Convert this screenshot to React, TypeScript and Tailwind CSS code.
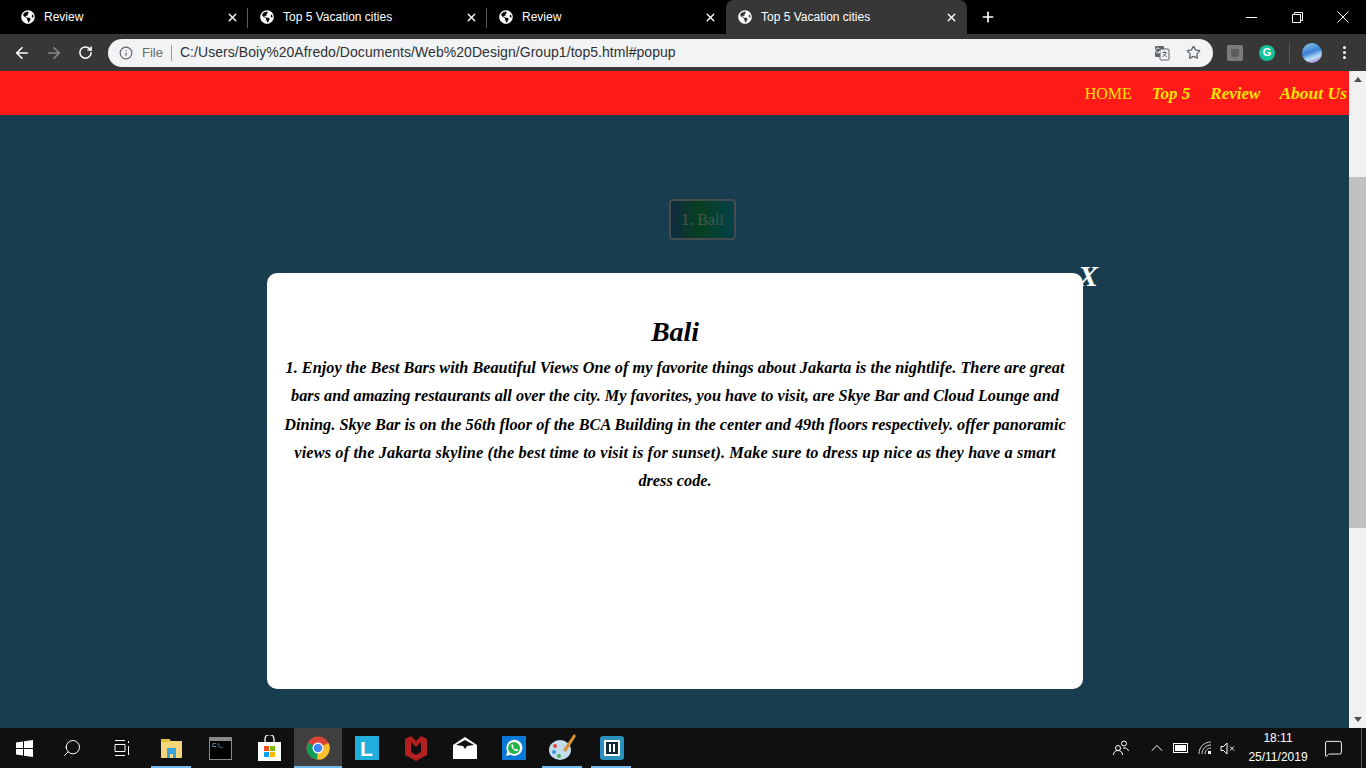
import { ArrowLeft, ArrowRight, RotateCw, Info, Star, X, Plus, Search, ChevronUp, MessageSquare } from "lucide-react"
import { FaGlobeAmericas } from "react-icons/fa"

const script = "font-['Liberation_Serif',serif] italic font-bold"

const bodyLines = [
  { text: "1. Enjoy the Best Bars with Beautiful Views One of my favorite things about Jakarta is the nightlife. There are great", cls: "" },
  { text: "bars and amazing restaurants all over the city. My favorites, you have to visit, are Skye Bar and Cloud Lounge and", cls: "" },
  { text: "Dining. Skye Bar is on the 56th floor of the BCA Building in the center and 49th floors respectively. offer panoramic", cls: "" },
  { text: "views of the Jakarta skyline (the best time to visit is for sunset). Make sure to dress up nice as they have a smart", cls: "tracking-[0.13px]" },
  { text: "dress code.", cls: "" },
]

function Tab({ title, active, divider }: { title: string; active?: boolean; divider?: boolean }) {
  return (
    <div
      className={
        active
          ? "relative flex h-[34px] w-[241px] items-center rounded-t-[8px] bg-[#373737] pl-[12px] pr-[9px]"
          : "relative flex h-[34px] w-[239px] items-center pl-[12px] pr-[9px]"
      }
    >
      <FaGlobeAmericas className="h-[14px] w-[14px] shrink-0 text-white" />
      <span className="ml-[9px] flex-1 text-[12px] text-white">{title}</span>
      <X className="h-[13px] w-[13px] text-white" strokeWidth={2.5} />
      {divider && <div className="absolute right-0 top-[8px] h-[20px] w-px bg-[#5a5a5a]" />}
    </div>
  )
}

function TaskCell({ children, bar, active }: { children: React.ReactNode; bar?: boolean; active?: boolean }) {
  return (
    <div className={active ? "relative flex h-10 w-[48px] items-center justify-center bg-[#3f3f3f]" : "relative flex h-10 w-[49px] items-center justify-center"}>
      {children}
      {bar && <div className={active ? "absolute bottom-0 left-0 h-[2px] w-full bg-[#76b9ed]" : "absolute bottom-0 left-[4px] h-[2px] w-[40px] bg-[#76b9ed]"} />}
    </div>
  )
}

function Scrollbar() {
  return (
    <div className="flex w-[17px] flex-col items-center bg-[#f1f1f1]">
      <div className="flex h-[17px] items-center justify-center">
        <div className="h-0 w-0 border-x-[4px] border-b-[5px] border-x-transparent border-b-[#505050]" />
      </div>
      <div className="mt-[89px] h-[351px] w-full bg-[#c1c1c1]" />
      <div className="flex-1" />
      <div className="flex h-[17px] items-center justify-center">
        <div className="h-0 w-0 border-x-[4px] border-t-[5px] border-x-transparent border-t-[#505050]" />
      </div>
    </div>
  )
}

export default function App() {
  return (
    <div className="flex h-[768px] w-[1366px] flex-col overflow-hidden bg-black font-['Liberation_Sans',sans-serif]">
      {/* tab strip */}
      <div className="flex h-[34px] items-center bg-black pl-[9px]">
        <Tab title="Review" divider />
        <Tab title="Top 5 Vacation cities" divider />
        <Tab title="Review" />
        <Tab title="Top 5 Vacation cities" active />
        <Plus className="ml-[13px] h-[16px] w-[16px] text-white" strokeWidth={2.5} />
        <div className="ml-auto flex items-center">
          <div className="flex w-[46px] justify-center"><div className="h-px w-[11px] bg-white" /></div>
          <div className="flex w-[46px] justify-center">
            <svg width="11" height="11" viewBox="0 0 11 11" fill="none" stroke="white">
              <path d="M0.5 2.5h8v8h-8z M2.5 2.5v-2h8v8h-2" />
            </svg>
          </div>
          <div className="flex w-[46px] justify-center">
            <svg width="12" height="12" viewBox="0 0 12 12" stroke="white">
              <path d="M0.5 0.5l11 11M11.500 0.500l-11 11" />
            </svg>
          </div>
        </div>
      </div>

      {/* toolbar */}
      <div className="flex h-[37px] items-center bg-[#373737] pl-[13px] pr-[14px]">
        <ArrowLeft className="h-[18px] w-[18px] text-white" strokeWidth={2.2} />
        <ArrowRight className="ml-[14px] h-[18px] w-[18px] text-[#8a8a8a]" strokeWidth={2.2} />
        <RotateCw className="ml-[15px] h-[15px] w-[15px] text-white" strokeWidth={2.4} />
        <div className="ml-[15px] flex h-[28px] w-[1105px] items-center rounded-full bg-[#f1f3f4] pl-[11px] pr-[12px]">
          <Info className="h-[14px] w-[14px] text-[#5f6368]" />
          <span className="ml-[9px] text-[13px] text-[#6a6a6a]">File</span>
          <div className="mx-[8px] h-[16px] w-px bg-[#9a9a9a]" />
          <span className="text-[14px] tracking-[0.05px] text-[#303134]">C:/Users/Boiy%20Afredo/Documents/Web%20Design/Group1/top5.html#popup</span>
          <svg className="ml-auto" width="16" height="16" viewBox="0 0 16 16">
            <rect x="1" y="1" width="9" height="11" rx="1" fill="#5f6368" />
            <rect x="6" y="4" width="9" height="11" rx="1" fill="#f1f3f4" stroke="#5f6368" />
            <path d="M8.5 7.5h4M10.5 6.5v1M12 7.5c-.5 2-2 3.5-3.5 4M9.5 9c.5 1 1.800 2 3 2.500" stroke="#5f6368" fill="none" />
            <path d="M5.500 3.500a2.500 2.500 0 1 0 1 3h-2" stroke="#f1f3f4" fill="none" />
          </svg>
          <Star className="ml-[16px] h-[15px] w-[15px] text-[#5f6368]" strokeWidth={2} />
        </div>
        <div className="ml-[14px] flex h-[16px] w-[16px] items-center justify-center rounded-[2px] bg-[#7b7b7b]">
          <div className="h-[8px] w-[8px] rounded-b-[3px] bg-[#5d5d5d]" />
        </div>
        <div className="ml-[16px] flex h-[16px] w-[16px] items-center justify-center rounded-full bg-[#15c39a] text-[11px] font-bold leading-none text-white">G</div>
        <div className="ml-[14px] h-[20px] w-px bg-[#5a5a5a]" />
        <div className="ml-[12px] h-[20px] w-[20px] rounded-full bg-[linear-gradient(160deg,#8fd4f0_0%,#3d7fd6_45%,#b7e3f4_70%,#9a4fc0_100%)]" />
        <div className="ml-[21px] flex flex-col gap-[2px]">
          <div className="h-[3px] w-[3px] rounded-full bg-white" />
          <div className="h-[3px] w-[3px] rounded-full bg-white" />
          <div className="h-[3px] w-[3px] rounded-full bg-white" />
        </div>
      </div>

      {/* page */}
      <div className="flex h-[657px]">
        <div className="flex flex-1 flex-col bg-[#183d4e]">
          <nav className="flex h-[44px] items-baseline justify-end bg-[#ff1a1a] pr-[2px] pt-[9px] text-[#f6e500]">
            <a className="font-['Liberation_Serif',serif] text-[16px]">HOME</a>
            <a className={`${script} ml-[20px] text-[17px]`}>Top 5</a>
            <a className={`${script} ml-[20px] text-[17px]`}>Review</a>
            <a className={`${script} ml-[19px] text-[17.5px]`}>About Us</a>
          </nav>

          <button className="ml-[669px] mt-[84px] flex h-[41px] w-[67px] items-center justify-center rounded-[4px] border-2 border-[#454b4e] bg-[linear-gradient(90deg,#0f2a3e_0%,#07401f_45%,#03414a_100%)] font-['Liberation_Serif',serif] text-[16px] text-[#47574f]">
            1. Bali
          </button>

          <div className="relative ml-[267px] mt-[33px] h-[416px] w-[816px] rounded-[10px] bg-white pt-[41px] text-center text-black">
            <span className={`${script} absolute right-[-15px] top-[-17px] text-[30px] leading-[40px] text-white`}>X</span>
            <h2 className={`${script} text-[28px] leading-[36px]`}>Bali</h2>
            <div className={`${script} mt-[4px] text-[16.3px] leading-[28.3px]`}>
              {bodyLines.map((line) => (
                <div key={line.text} className={`whitespace-nowrap ${line.cls}`}>{line.text}</div>
              ))}
            </div>
          </div>
        </div>
        <Scrollbar />
      </div>

      {/* taskbar */}
      <div className="flex h-10 items-center bg-[#101010]">
        <div className="flex h-10 w-[48px] items-center justify-center">
          <svg width="17" height="17" viewBox="0 0 17 17" fill="white">
            <path d="M0 2.500l7-1v6.500h-7z M8 1.300l9-1.300v8h-9z M0 9h7v6.500l-7-1z M8 9h9v8l-9-1.300z" />
          </svg>
        </div>
        <div className="flex h-10 w-[48px] items-center justify-center">
          <Search className="h-[20px] w-[20px] -scale-x-100 text-white" strokeWidth={1.2} />
        </div>
        <div className="flex h-10 w-[51px] items-center justify-center">
          <svg width="16" height="18" viewBox="0 0 16 18" fill="none" stroke="white">
            <path d="M1 1.500h10M1 5.500h10v7h-10zM1 16.500h10M14.500 2v2M14.500 7v9" />
          </svg>
        </div>
        <TaskCell bar>
          <svg width="23" height="22" viewBox="0 0 23 22">
            <path d="M1 2h8l2 2h11v16a1 1 0 0 1-1 1H2a1 1 0 0 1-1-1z" fill="#f5d67b" />
            <path d="M1 2h9v3H1z" fill="#e9bb3f" />
            <path d="M7 11h9v10h-3v-4h-3v4H7z" fill="#3aa4e3" />
          </svg>
        </TaskCell>
        <TaskCell>
          <div className="flex h-[23px] w-[23px] items-start border border-[#8a8a8a] bg-black bg-[linear-gradient(#8a8a8a_3px,#000_3px)] pl-[2px] pt-[4px] text-[6px] leading-none text-[#d0d0d0]">C:\_</div>
        </TaskCell>
        <TaskCell>
          <svg width="23" height="26" viewBox="0 0 23 26">
            <path d="M7 7V4a4.500 4.500 0 0 1 9 0v3" fill="none" stroke="white" strokeWidth="1.300" />
            <path d="M0 7h23v19H0z" fill="white" />
            <path d="M6 11h5v5H6z" fill="#f25022" />
            <path d="M12 11h5v5h-5z" fill="#7fba00" />
            <path d="M6 17h5v5H6z" fill="#00a4ef" />
            <path d="M12 17h5v5h-5z" fill="#ffb900" />
          </svg>
        </TaskCell>
        <TaskCell bar active>
          <svg width="24" height="24" viewBox="0 0 24 24">
            <circle cx="12" cy="12" r="11.500" fill="#db4437" />
            <path d="M12 12L22.500 7A11.500 11.500 0 0 1 11 23.500z" fill="#fbc02d" />
            <path d="M12 12L11 23.500A11.500 11.500 0 0 1 2 6.500z" fill="#0f9d58" />
            <circle cx="12" cy="12" r="5.500" fill="white" />
            <circle cx="12" cy="12" r="4.300" fill="#4285f4" />
          </svg>
        </TaskCell>
        <TaskCell>
          <div className="flex h-[24px] w-[24px] items-center justify-center bg-[#1eafdc] text-[21px] font-bold leading-none text-white">L</div>
        </TaskCell>
        <TaskCell>
          <svg width="22" height="25" viewBox="0 0 22 25">
            <path d="M0 3L6 0l5 5 5-5 6 3v16l-11 6L0 19z" fill="#b3201f" />
            <path d="M6 6l5 5 5-5v10l-5 3-5-3z" fill="#101010" />
          </svg>
        </TaskCell>
        <TaskCell>
          <svg width="24" height="22" viewBox="0 0 24 22">
            <path d="M0 8L12 0l12 8v14H0z" fill="white" />
            <path d="M3 8l9-5 9 5-7 1-2 3-2-3z" fill="#101010" />
          </svg>
        </TaskCell>
        <TaskCell>
          <div className="flex h-[24px] w-[24px] items-center justify-center bg-[#0a78d7]">
            <svg width="18" height="18" viewBox="0 0 18 18">
              <path d="M1 17l1.300-4.500A8 8 0 1 1 5.500 15.800z" fill="white" />
              <circle cx="9" cy="9" r="6" fill="#25b34b" />
              <path d="M6.500 5.500l1.500 0 .7 2-.8.8c.5 1 1.200 1.700 2.300 2.300l.8-.8 2 .7v1.500c-3.500.8-7.300-3-6.500-6.500z" fill="white" />
            </svg>
          </div>
        </TaskCell>
        <TaskCell bar>
          <svg width="27" height="28" viewBox="0 0 27 28">
            <ellipse cx="11" cy="16" rx="11" ry="10" fill="#c5dcef" />
            <circle cx="6" cy="12" r="2" fill="#e0483e" />
            <circle cx="5" cy="18" r="2" fill="#3e8fe0" />
            <circle cx="10" cy="22" r="2" fill="#4cb050" />
            <path d="M25 0l2 2-10 16-3-2z" fill="#d9903a" />
          </svg>
        </TaskCell>
        <TaskCell bar>
          <div className="flex h-[24px] w-[24px] items-center justify-center rounded-[3px] bg-[#2a8fbf]">
            <div className="flex h-[16px] w-[16px] items-center justify-center gap-[2px] border-2 border-white bg-[#0f2b3a]">
              <div className="h-[8px] w-[2px] bg-white" />
              <div className="h-[8px] w-[2px] bg-white" />
            </div>
          </div>
        </TaskCell>

        {/* tray */}
        <div className="ml-auto flex h-10 items-center text-white">
          <svg width="16" height="16" viewBox="0 0 16 16" fill="none" stroke="white">
            <circle cx="5" cy="8" r="2.500" />
            <path d="M0.500 15c0-3 2-4.500 4.500-4.500s4.500 1.500 4.500 4.500" />
            <circle cx="11" cy="3.500" r="2.500" />
            <path d="M10 8c2.500-.5 5 .5 5.500 3" />
          </svg>
          <ChevronUp className="ml-[18px] h-[20px] w-[20px]" strokeWidth={1.2} />
          <div className="ml-[6px] flex h-[10px] w-[15px] items-center border border-white p-[1px]">
            <div className="h-full w-full bg-white" />
          </div>
          <svg className="ml-[10px]" width="15" height="14" viewBox="0 0 15 14" fill="none" stroke="#d0d0d0">
            <path d="M1 13C1 6 6 1 13 1M4 13c0-5 4-9 9-9M7 13c0-3 2-6 6-6" />
            <rect x="10" y="10" width="3" height="3" fill="white" stroke="none" />
          </svg>
          <svg className="ml-[7px]" width="16" height="13" viewBox="0 0 16 13" fill="none" stroke="white">
            <path d="M1 4.500h2.500L7 1v11L3.500 8.500H1zM10 4.500l4 4M14 4.500l-4 4" />
          </svg>
          <div className="ml-[11px] flex w-[62px] flex-col items-center text-[12px] leading-[19px] text-white">
            <span>18:11</span>
            <span>25/11/2019</span>
          </div>
          <MessageSquare className="ml-[15px] h-[19px] w-[19px]" strokeWidth={1.2} />
          <div className="ml-[18px] h-10 w-px bg-[#555]" />
          <div className="w-[4px]" />
        </div>
      </div>
    </div>
  )
}
